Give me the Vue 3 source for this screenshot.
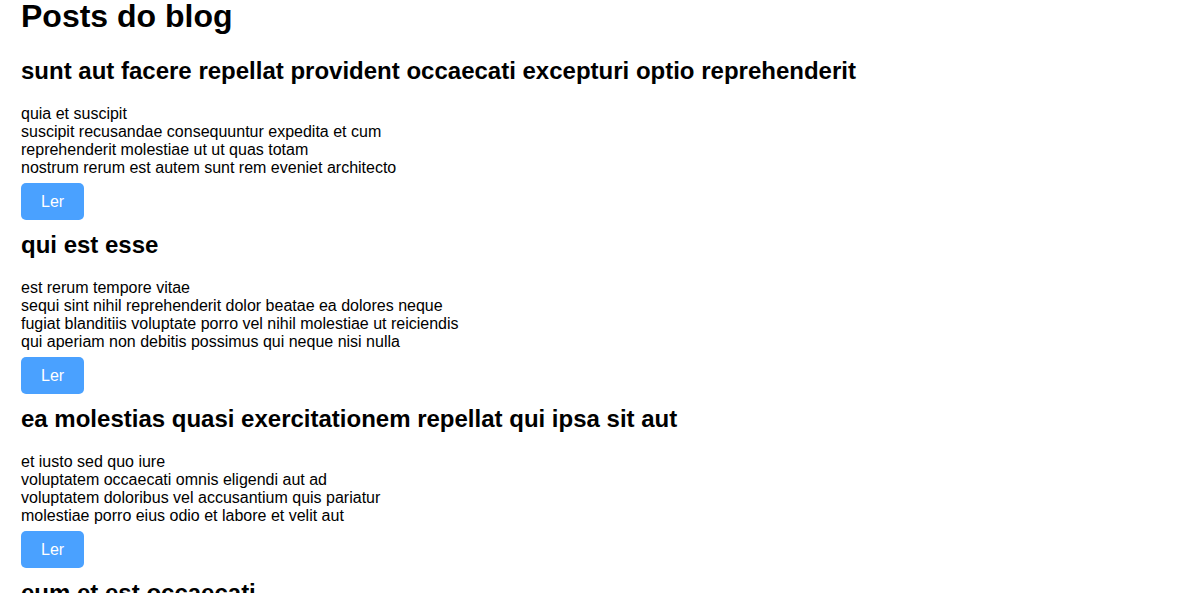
<script setup>
const posts = [
  {
    id: 1,
    title: 'sunt aut facere repellat provident occaecati excepturi optio reprehenderit',
    body: 'quia et suscipit\nsuscipit recusandae consequuntur expedita et cum\nreprehenderit molestiae ut ut quas totam\nnostrum rerum est autem sunt rem eveniet architecto',
  },
  {
    id: 2,
    title: 'qui est esse',
    body: 'est rerum tempore vitae\nsequi sint nihil reprehenderit dolor beatae ea dolores neque\nfugiat blanditiis voluptate porro vel nihil molestiae ut reiciendis\nqui aperiam non debitis possimus qui neque nisi nulla',
  },
  {
    id: 3,
    title: 'ea molestias quasi exercitationem repellat qui ipsa sit aut',
    body: 'et iusto sed quo iure\nvoluptatem occaecati omnis eligendi aut ad\nvoluptatem doloribus vel accusantium quis pariatur\nmolestiae porro eius odio et labore et velit aut',
  },
  { id: 4, title: 'eum et est occaecati', body: '' },
]
</script>

<template>
  <main class="blog">
    <h1 class="heading">Posts do blog</h1>
    <article v-for="post in posts" :key="post.id" class="post">
      <h2 class="title">{{ post.title }}</h2>
      <p v-if="post.body" class="body">{{ post.body }}</p>
      <button v-if="post.body" type="button" class="read">Ler</button>
    </article>
  </main>
</template>

<style>
body {
  margin: 0;
}
</style>

<style scoped>
.blog {
  padding: 0 21px;
  color: #000;
  font-family: "Liberation Sans", Arial, sans-serif;
}
.heading {
  margin: 0 0 25px;
  font-size: 32px;
  line-height: 32px;
}
.post {
  margin-bottom: 11px;
}
.title {
  margin: 0 0 20px;
  font-size: 24px;
  line-height: 28px;
}
.body {
  margin: 0 0 6px;
  font-size: 16px;
  line-height: 18px;
  white-space: pre-line;
}
.read {
  display: block;
  padding: 0 20px;
  border: 0;
  border-radius: 5px;
  background: #4aa1ff;
  color: #fff;
  font-family: inherit;
  font-size: 16px;
  line-height: 37px;
}
</style>
